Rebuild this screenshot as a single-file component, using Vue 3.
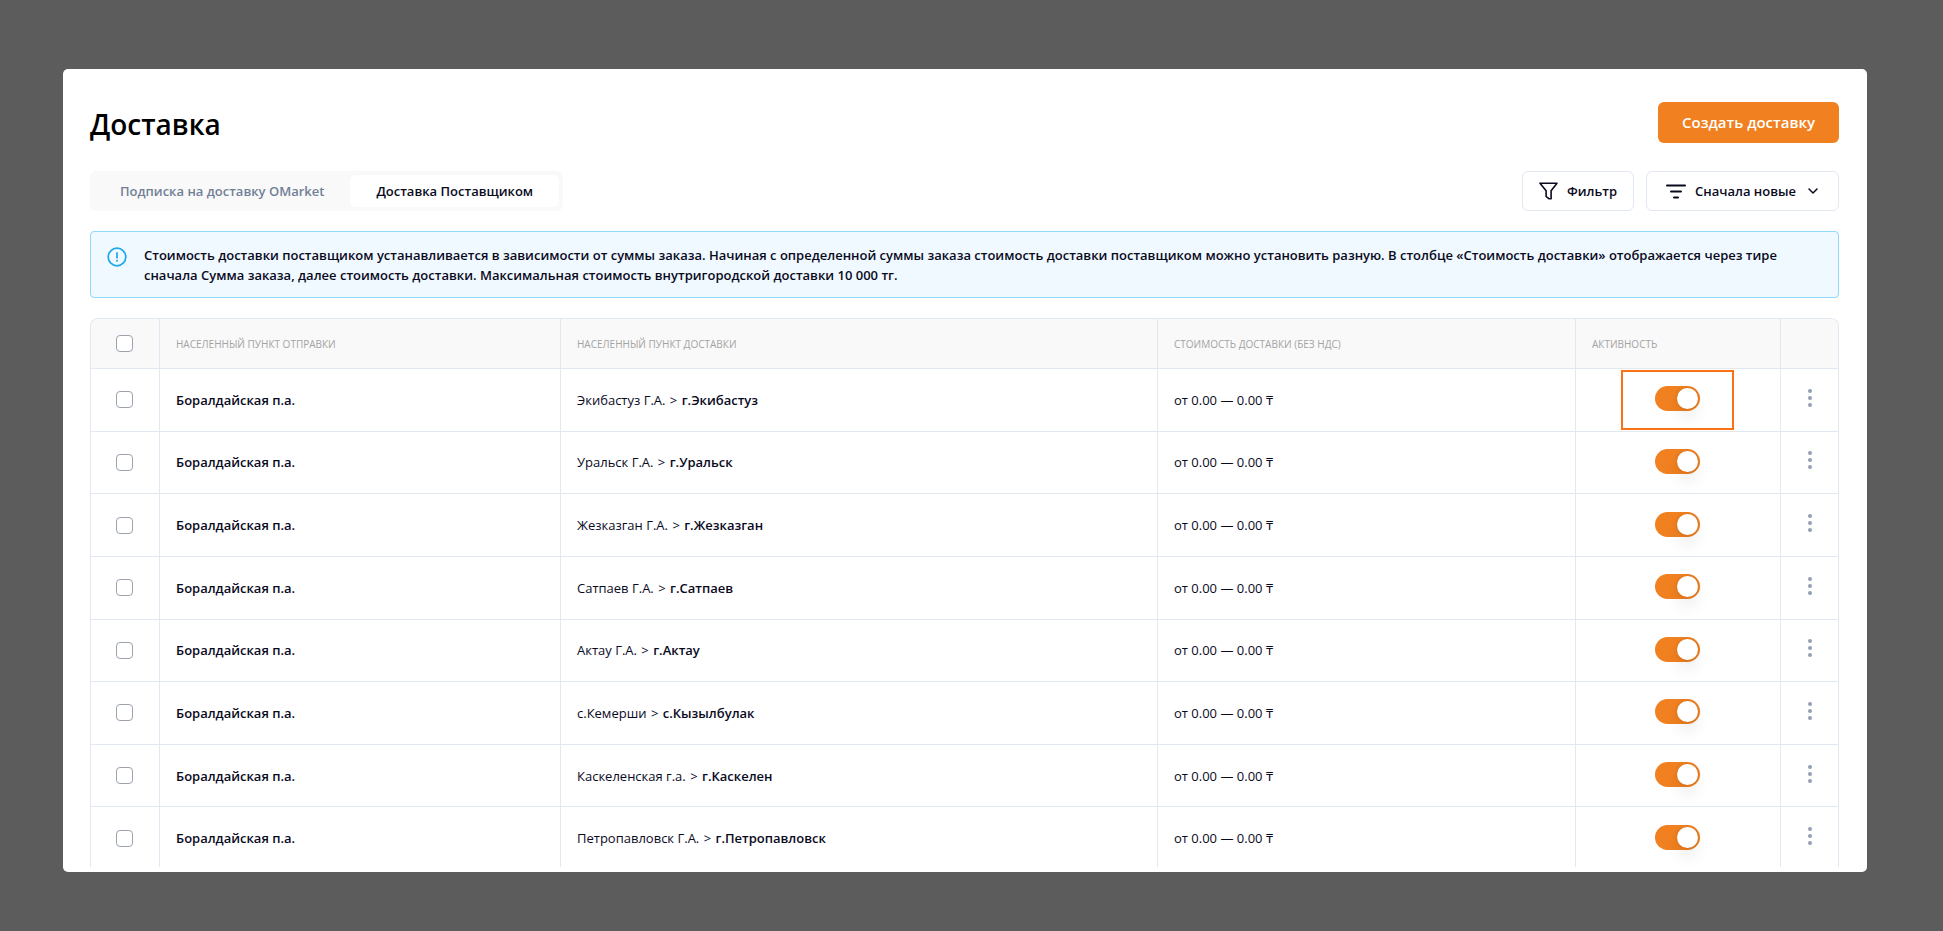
<script setup>
import { ref } from 'vue'

const tab = ref('supplier')

const routes = [
  ['Экибастуз Г.А.', 'г.Экибастуз'],
  ['Уральск Г.А.', 'г.Уральск'],
  ['Жезказган Г.А.', 'г.Жезказган'],
  ['Сатпаев Г.А.', 'г.Сатпаев'],
  ['Актау Г.А.', 'г.Актау'],
  ['с.Кемерши', 'с.Кызылбулак'],
  ['Каскеленская г.а.', 'г.Каскелен'],
  ['Петропавловск Г.А.', 'г.Петропавловск'],
]

const rows = ref(
  routes.map(([region, city], i) => ({
    id: i,
    from: 'Боралдайская п.а.',
    region,
    city,
    price: 'от 0.00 — 0.00 ₸',
    selected: false,
    active: true,
    highlighted: i === 0,
  }))
)
</script>

<template>
  <div class="page">
    <main class="card">
      <header class="head">
        <h1>Доставка</h1>
        <button type="button" class="create">Создать доставку</button>
      </header>

      <div class="toolbar">
        <nav class="tabs">
          <button type="button" :class="{ current: tab === 'market' }" @click="tab = 'market'">
            Подписка на доставку OMarket
          </button>
          <button type="button" :class="{ current: tab === 'supplier' }" @click="tab = 'supplier'">
            Доставка Поставщиком
          </button>
        </nav>
        <div class="actions">
          <button type="button" class="tool">
            <svg width="19" height="18" viewBox="0 0 19 18" fill="none" stroke="currentColor" stroke-width="1.6" stroke-linejoin="round">
              <path d="M1 1.2h17l-5.9 7.6v8h-2l-3-2.4V8.8z" />
            </svg>
            <span>Фильтр</span>
          </button>
          <button type="button" class="tool sort">
            <svg width="20" height="15" viewBox="0 0 20 15" fill="none" stroke="currentColor" stroke-width="2" stroke-linecap="round">
              <path d="M1 1.5h18M5 7.5h10M8 13.5h4" />
            </svg>
            <span>Сначала новые</span>
            <svg class="chevron" width="10" height="6" viewBox="0 0 10 6" fill="none" stroke="currentColor" stroke-width="1.5" stroke-linecap="round" stroke-linejoin="round">
              <path d="M1 1l4 4 4-4" />
            </svg>
          </button>
        </div>
      </div>

      <section class="notice">
        <svg width="20" height="20" viewBox="0 0 20 20" fill="none" stroke="currentColor" stroke-width="1.7">
          <circle cx="10" cy="10" r="8.8" />
          <path d="M10 5.8v5" stroke-linecap="round" />
          <circle cx="10" cy="13.8" r="1" fill="currentColor" stroke="none" />
        </svg>
        <p>
          Стоимость доставки поставщиком устанавливается в зависимости от суммы заказа. Начиная с определенной суммы заказа стоимость доставки поставщиком можно установить разную. В столбце «Стоимость доставки» отображается через тире сначала Сумма заказа, далее стоимость доставки. Максимальная стоимость внутригородской доставки 10 000 тг.
        </p>
      </section>

      <div class="table-wrap">
        <table>
          <colgroup>
            <col class="c-check" />
            <col class="c-from" />
            <col class="c-to" />
            <col class="c-price" />
            <col class="c-active" />
            <col class="c-menu" />
          </colgroup>
          <thead>
            <tr>
              <th class="center"><input type="checkbox" class="check" aria-label="Выбрать все" /></th>
              <th>Населенный пункт отправки</th>
              <th>Населенный пункт доставки</th>
              <th>Стоимость доставки (без НДС)</th>
              <th>Активность</th>
              <th></th>
            </tr>
          </thead>
          <tbody>
            <tr v-for="row in rows" :key="row.id">
              <td class="center">
                <input v-model="row.selected" type="checkbox" class="check" :aria-label="row.city" />
              </td>
              <td><b>{{ row.from }}</b></td>
              <td>{{ row.region }} <span class="sep">&gt;</span> <b>{{ row.city }}</b></td>
              <td>{{ row.price }}</td>
              <td class="center">
                <label class="switch" :class="{ highlighted: row.highlighted }">
                  <input v-model="row.active" type="checkbox" role="switch" :aria-label="'Активность: ' + row.city" />
                </label>
              </td>
              <td class="center">
                <button type="button" class="menu" :aria-label="'Меню: ' + row.city">
                  <svg width="4" height="18" viewBox="0 0 4 18" fill="currentColor">
                    <circle cx="2" cy="2" r="2" />
                    <circle cx="2" cy="9" r="2" />
                    <circle cx="2" cy="16" r="2" />
                  </svg>
                </button>
              </td>
            </tr>
          </tbody>
        </table>
      </div>
    </main>
  </div>
</template>

<style>
body {
  background: #5c5c5c;
}
</style>

<style scoped>
* {
  box-sizing: border-box;
}

.page {
  display: flex;
  height: 100vh;
  padding: 69px 76px 59px 63px;
  font-family: 'Open Sans', 'Noto Sans', sans-serif;
  color: #0a0a1e;
  background: #5c5c5c;
}

.card {
  display: flex;
  flex: 1;
  flex-direction: column;
  min-width: 0;
  padding: 33px 28px 5px 27px;
  border-radius: 5px;
  background: #fff;
}

button {
  font: inherit;
  color: inherit;
  cursor: pointer;
}

.head,
.toolbar {
  display: flex;
  justify-content: space-between;
  align-items: center;
}

.head {
  height: 41px;
}

h1 {
  margin: 0;
  padding-top: 2px;
  font-size: 28px;
  line-height: 40px;
  font-weight: 600;
  color: #000;
}

.create {
  height: 41px;
  padding: 0 24px 2px;
  border: 0;
  border-radius: 6px;
  background: #f08020;
  color: #fff;
  font-size: 15px;
  font-weight: 600;
}

.toolbar {
  height: 40px;
  margin-top: 28px;
  font-size: 13px;
  font-weight: 600;
}

.tabs {
  display: flex;
  height: 40px;
  padding: 4px;
  border-radius: 6px;
  background: #f9f9f9;
}

.tabs button {
  padding: 0 26px;
  border: 0;
  border-radius: 6px;
  background: none;
  color: #718096;
}

.tabs .current {
  background: #fff;
  color: #0a0a1e;
}

.actions {
  display: flex;
  gap: 12px;
}

.tool {
  display: flex;
  align-items: center;
  gap: 9px;
  height: 40px;
  padding: 0 16px;
  border: 1px solid #e2e8f0;
  border-radius: 6px;
  background: #fff;
}

.sort {
  padding: 0 20px 0 19px;
}

.chevron {
  margin-left: 3px;
}

.notice {
  display: flex;
  gap: 17px;
  margin-top: 20px;
  padding: 13px 16px 12px;
  border: 1px solid #90d8f8;
  border-radius: 4px;
  background: #f0f9ff;
}

.notice svg {
  flex: none;
  margin-top: 2px;
  color: #1ba9ea;
}

.notice p {
  margin: 0;
  font-size: 13px;
  line-height: 20px;
  font-weight: 600;
}

.table-wrap {
  flex: 1;
  min-height: 0;
  margin-top: 20px;
  overflow: hidden;
  border: 1px solid #e2e8f0;
  border-bottom: 0;
  border-radius: 8px 8px 0 0;
}

table {
  width: 100%;
  height: 551px;
  table-layout: fixed;
  border-collapse: separate;
  border-spacing: 0;
  font-size: 13px;
  line-height: 20px;
}

.c-check { width: 69px; }
.c-from { width: 401px; }
.c-to { width: 597px; }
.c-price { width: 418px; }
.c-active { width: 205px; }
.c-menu { width: 58px; }

th,
td {
  padding: 0 16px;
  border-bottom: 1px solid #e2e8f0;
  border-right: 1px solid #e2e8f0;
  text-align: left;
  vertical-align: middle;
}

th:last-child,
td:last-child {
  border-right: 0;
}

th {
  height: 50px;
  background: #f9f9f9;
  color: #a3a3a3;
  font-size: 10px;
  font-weight: 500;
  text-transform: uppercase;
}

b {
  font-weight: 600;
}

.sep {
  margin: 0 1px;
}

.center {
  padding: 0 1px 0 0;
  text-align: center;
}

.check {
  display: block;
  appearance: none;
  width: 17px;
  height: 17px;
  margin: 0 auto;
  border: 1px solid #9ca3af;
  border-radius: 4px;
  background: #fff;
}

.check:checked {
  background: #f08020;
}

.switch {
  display: flex;
  align-items: center;
  justify-content: center;
  width: 113px;
  height: 60px;
  margin: 0 auto;
  padding-bottom: 2px;
  border: 2px solid transparent;
}

.switch.highlighted {
  border-color: #f97316;
}

.switch input {
  appearance: none;
  display: flex;
  align-items: center;
  width: 45px;
  height: 25px;
  margin: 0;
  padding: 2px;
  border-radius: 13px;
  background: #cbd5e1;
  cursor: pointer;
}

.switch input::before {
  content: '';
  width: 21px;
  height: 21px;
  border-radius: 50%;
  background: #fff;
  box-shadow: 0 10px 15px rgba(0, 0, 0, 0.07), 0 0 4px rgba(0, 0, 0, 0.12);
}

.switch input:checked {
  justify-content: flex-end;
  background: #f08020;
}

.menu {
  display: flex;
  justify-content: center;
  width: 24px;
  margin: 0 auto;
  padding: 0 0 4px;
  border: 0;
  background: none;
  color: #94a0b2;
}
</style>
